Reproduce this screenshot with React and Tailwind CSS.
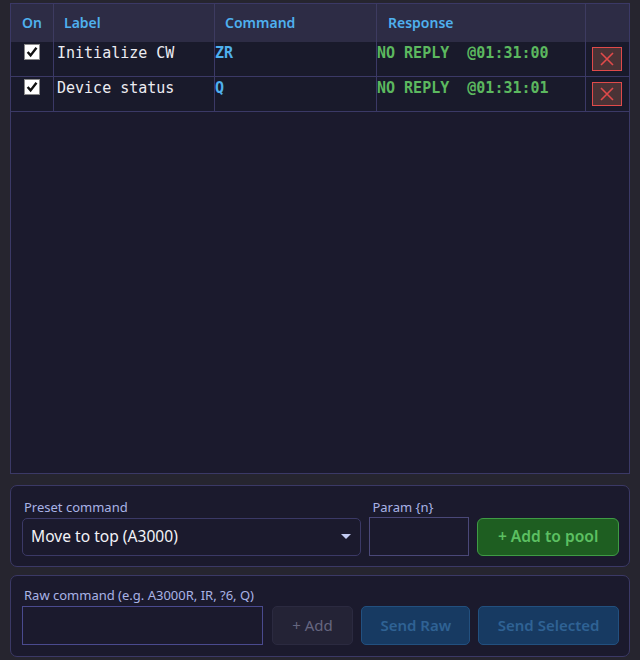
import { useState } from 'react';

const ui = { fontFamily: '"Noto Sans", "Open Sans", sans-serif' };
const mono = { fontFamily: '"DejaVu Sans Mono", "Liberation Mono", monospace' };

const initialRows = [
  { id: 1, on: true, label: 'Initialize CW', cmd: 'ZR', resp: 'NO REPLY  @01:31:00' },
  { id: 2, on: true, label: 'Device status', cmd: 'Q', resp: 'NO REPLY  @01:31:01' },
];

const CheckBox = ({ checked, onChange }) => (
  <button
    onClick={onChange}
    className="w-[16px] h-[16px] bg-white border border-[#8a8a8a] flex items-center justify-center"
  >
    {checked && (
      <svg width="12" height="12" viewBox="0 0 11 11">
        <path d="M1.5 5.5 L4.2 8.6 L9.6 1.6" fill="none" stroke="#111" strokeWidth="2.2" />
      </svg>
    )}
  </button>
);

const PoolTable = ({ rows, setRows }) => {
  const toggle = (id) => setRows(rows.map((r) => (r.id === id ? { ...r, on: !r.on } : r)));
  const remove = (id) => setRows(rows.filter((r) => r.id !== id));

  return (
    <div className="h-[471px] border border-[#3b3966] bg-[#1b1a2d] overflow-hidden">
      {/* header */}
      <div
        className="grid grid-cols-[42px_1px_160px_1px_161px_1px_208px_1px_43px] h-[38px] bg-[#2d2c45] text-[14px] font-semibold text-[#4fb0ee]"
        style={ui}
      >
        <div className="flex items-center justify-center pb-[1px]">On</div>
        <div className="bg-[#3d3b60]" />
        <div className="flex items-center pl-[10px] pb-[1px]">Label</div>
        <div className="bg-[#3d3b60]" />
        <div className="flex items-center pl-[10px] pb-[1px]">Command</div>
        <div className="bg-[#3d3b60]" />
        <div className="flex items-center pl-[11px] pb-[1px]">Response</div>
        <div className="bg-[#3d3b60]" />
        <div />
      </div>

      {/* rows */}
      {rows.map((r) => (
        <div
          key={r.id}
          className="grid grid-cols-[42px_1px_160px_1px_161px_1px_208px_1px_43px] h-[35px] border-b border-[#3b3966] bg-[#191a2b] text-[15px] leading-[18px]"
          style={mono}
        >
          <div className="flex justify-center pt-[2px]">
            <CheckBox checked={r.on} onChange={() => toggle(r.id)} />
          </div>
          <div className="bg-[#3b3966]" />
          <div className="pl-[3px] pt-[2px] text-[#ececf2] whitespace-pre">{r.label}</div>
          <div className="bg-[#3b3966]" />
          <div className="pt-[2px] font-bold text-[#4fb0ee]">{r.cmd}</div>
          <div className="bg-[#3b3966]" />
          <div className="pt-[2px] font-bold text-[#5cb85f] whitespace-pre">{r.resp}</div>
          <div className="bg-[#3b3966]" />
          <div className="flex justify-center pt-[5px] pr-[1px]">
            <button
              onClick={() => remove(r.id)}
              className="w-[30px] h-[24px] bg-[#4a3336] border border-[#e04a4a] flex items-center justify-center"
            >
              <svg width="14" height="14" viewBox="0 0 14 14">
                <path d="M1 1 L13 13 M13 1 L1 13" stroke="#e04a4a" strokeWidth="1.6" />
              </svg>
            </button>
          </div>
        </div>
      ))}
    </div>
  );
};

export default function App() {
  const [rows, setRows] = useState(initialRows);

  return (
    <div className="w-[640px] h-[660px] bg-[#26252f] px-[10px] pt-[3px] flex flex-col overflow-hidden" style={ui}>
      <PoolTable rows={rows} setRows={setRows} />

      {/* Preset panel */}
      <div className="mt-[11px] h-[82px] border border-[#3b3966] rounded-[7px] bg-[#1b1a2d] flex items-end gap-[8px] pl-[11px] pr-[10px] pb-[10px]">
        <div className="w-[340px] flex flex-col">
          <span className="pl-[2px] text-[13px] leading-[18px] text-[#a9b3e6] mb-[2px]">Preset command</span>
          <div className="h-[38px] border border-[#3b3966] rounded-[5px] bg-[#1b1a2d] flex items-center justify-between pl-[8px] pr-[9px]">
            <span className="text-[15.6px] text-[#f2f2f7]">Move to top (A3000)</span>
            <svg width="10" height="6" viewBox="0 0 10 6">
              <path d="M0 0 L10 0 L5 5 Z" fill="#c3cbf2" />
            </svg>
          </div>
        </div>
        <div className="w-[100px] flex flex-col">
          <span className="pl-[3px] text-[13px] leading-[18px] text-[#a9b3e6] mb-[1px]">Param {'{n}'}</span>
          <div className="h-[39px] border border-[#4a4878] bg-[#1b1a2d]" />
        </div>
        <button className="w-[142px] h-[38px] rounded-[6px] bg-[#1e5e21] border border-[#3f9b45] text-[15.6px] font-semibold text-[#5cc062]">
          + Add to pool
        </button>
      </div>

      {/* Raw panel */}
      <div className="mt-[8px] h-[82px] border border-[#3b3966] rounded-[7px] bg-[#1b1a2d] flex flex-col pl-[11px] pr-[10px] pt-[10px]">
        <span className="pl-[2px] text-[13px] leading-[18px] text-[#a9b3e6] mb-[2px]">Raw command (e.g. A3000R, IR, ?6, Q)</span>
        <div className="flex gap-[8px]">
          <div className="w-[241px] h-[39px] border border-[#4a4a8e] bg-[#1b1a2d] mr-[1px]" />
          <button className="w-[82px] h-[39px] rounded-[5px] bg-[#242336] border border-[#2b2a40] text-[15px] text-[#666680]">
            + Add
          </button>
          <button className="w-[109px] h-[39px] rounded-[5px] bg-[#173a62] border border-[#22507f] text-[15px] font-semibold text-[#2f6294]">
            Send Raw
          </button>
          <button className="w-[141px] h-[39px] rounded-[5px] bg-[#173a62] border border-[#22507f] text-[15px] font-semibold text-[#2f6294]">
            Send Selected
          </button>
        </div>
      </div>
    </div>
  );
}
